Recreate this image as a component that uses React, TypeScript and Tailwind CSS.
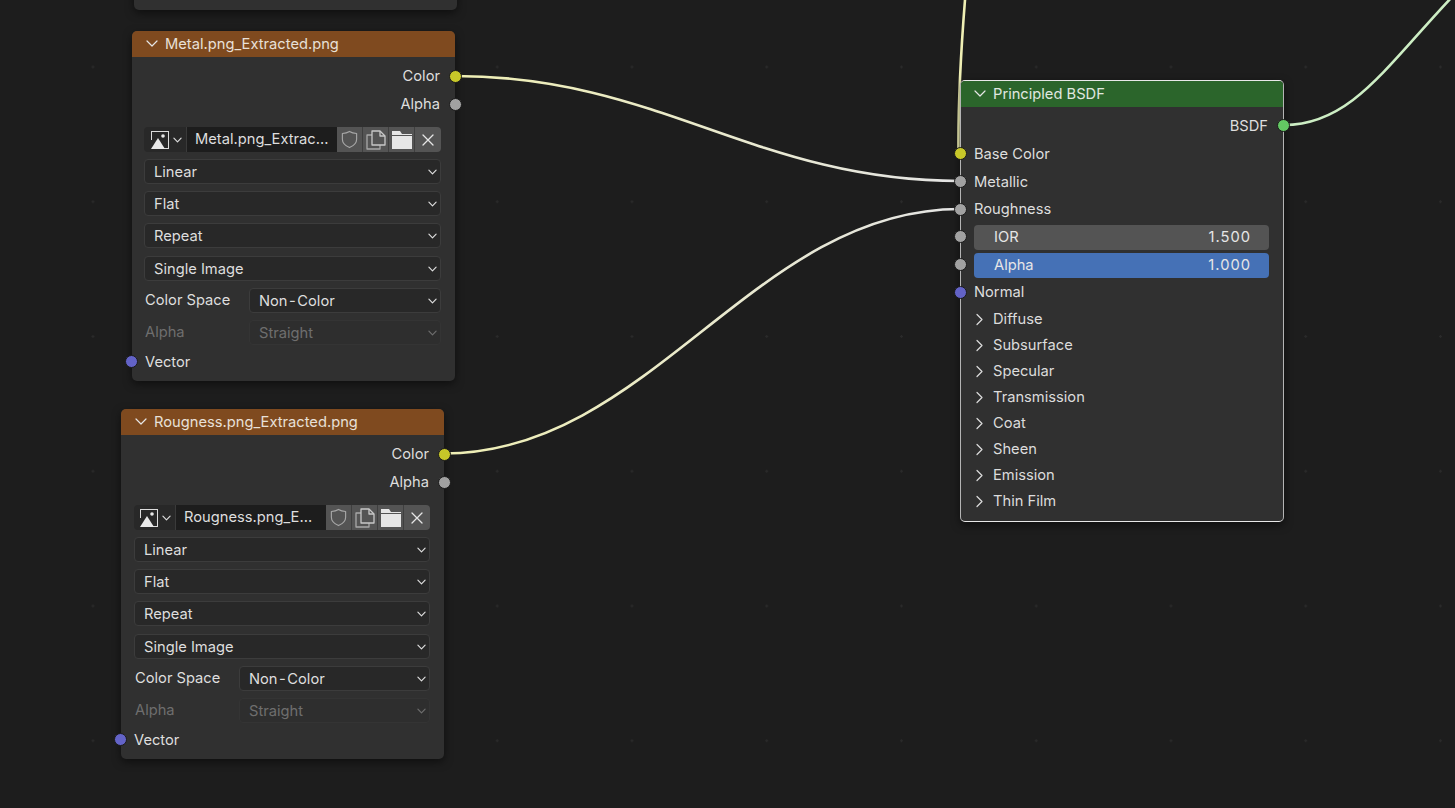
import React from 'react';

const font = { fontFamily: 'Inter, "Noto Sans", sans-serif' };

const ChevronDown = ({ className = 'w-[9px] h-[6px]' }: { className?: string }) => (
  <svg viewBox="0 0 10 6" className={className} fill="none" stroke="currentColor" strokeWidth="1.3" strokeLinecap="round" strokeLinejoin="round">
    <path d="M1 1l4 4 4-4" />
  </svg>
);

const ChevronHeader = () => (
  <svg viewBox="0 0 12 7" className="w-[12px] h-[7px] -mt-[2px] text-[#e6e6e6]" fill="none" stroke="currentColor" strokeWidth="1.2" strokeLinecap="round" strokeLinejoin="round">
    <path d="M1 1l5 5 5-5" />
  </svg>
);

const ChevronRight = () => (
  <svg viewBox="0 0 7 12" className="w-[7px] h-[13px] text-[#dcdcdc]" fill="none" stroke="currentColor" strokeWidth="1.2" strokeLinecap="round" strokeLinejoin="round">
    <path d="M1 1l5 5-5 5" />
  </svg>
);

const ImageIcon = () => (
  <svg viewBox="0 0 20 20" className="w-[20px] h-[20px] shrink-0">
    <path d="M1 1h18v18h-5v-1h4V2H2v8H1z" fill="#dcdcdc" />
    <path d="M1 19l7-11 7 11z" fill="#e8e8e8" />
    <circle cx="13" cy="6" r="1.8" fill="#e8e8e8" />
  </svg>
);

const ShieldIcon = () => (
  <svg viewBox="0 0 20 20" className="w-[19px] h-[19px] text-[#a8a8a8]" fill="none" stroke="currentColor" strokeWidth="1.2" strokeLinejoin="round">
    <path d="M10 1.5c2.400 1.500 5 2 7.500 2.200v6c0 4-3 6.800-7.500 8.800-4.500-2-7.500-4.800-7.500-8.800v-6C5 3.500 7.600 3 10 1.500z" />
  </svg>
);

const CopyIcon = () => (
  <svg viewBox="0 0 20 20" className="w-[20px] h-[20px] text-[#c8c8c8]" fill="none" stroke="currentColor" strokeWidth="1.3" strokeLinejoin="round">
    <path d="M6 5H1v14h13v-4" stroke="#a8a8a8" />
    <path d="M6 1h8l5 5v9H6z" />
    <path d="M14 1v5h5" />
  </svg>
);

const FolderIcon = () => (
  <svg viewBox="0 0 20 18" className="w-[20px] h-[18px]" fill="#e6e6e6">
    <path d="M0 0h8l2 3h10v1H0z" />
    <path d="M0 5h20v13H0z" />
  </svg>
);

const CloseIcon = () => (
  <svg viewBox="0 0 12 12" className="w-[12px] h-[12px] text-[#e6e6e6]" fill="none" stroke="currentColor" strokeWidth="1.3" strokeLinecap="round">
    <path d="M1 1l10 10M11 1L1 11" />
  </svg>
);

const Select = ({ children, disabled, className = '' }: { children: React.ReactNode; disabled?: boolean; className?: string }) => (
  <div
    className={`h-[25px] flex items-center justify-between pl-[9px] pr-[3px] pt-[1px] rounded-[4px] border ${
      disabled ? 'border-[#343434] bg-[#2e2e2e] text-[#6e6e6e]' : 'border-[#3c3c3c] bg-[#282828] text-[#dedede]'
    } ${className}`}
  >
    <span>{children}</span>
    <ChevronDown />
  </div>
);

const Socket = ({ color, className }: { color: string; className: string }) => (
  <span
    className={`absolute w-[13px] h-[13px] rounded-full border border-[#1a1a1a] ${className}`}
    style={{ backgroundColor: color }}
  />
);

const ImageNode = ({ title, file, className, inset, thumb }: { title: string; file: string; className: string; inset: string; thumb: string }) => (
  <div className={`absolute w-[323px] h-[350px] rounded-[5px] bg-[#303030] shadow-[0_3px_8px_rgba(0,0,0,0.5)] text-[14.7px] text-[#dedede] ${className}`}>
    <div className="h-[26px] rounded-t-[5px] bg-[#7f4a1f] flex items-center pl-[14px] gap-[7px] text-[#e8e0d8]">
      <ChevronHeader />
      <span>{title}</span>
    </div>
    <div className="h-[27px] mt-[6px] pr-[15px] flex items-center justify-end">Color</div>
    <div className="h-[28px] pr-[15px] flex items-center justify-end">Alpha</div>
    <div className={`mt-[9px] flex flex-col gap-[7px] ${inset}`}>
      <div className="h-[25px] flex">
        <div className={`flex items-center gap-[3px] rounded-l-[4px] bg-[#282828] ${thumb}`}>
          <ImageIcon />
          <ChevronDown className="w-[9px] h-[6px] text-[#dcdcdc]" />
        </div>
        <div className="w-[151px] flex items-center pl-[8px] pb-[1px] bg-[#1d1d1d] border-l border-[#3a3a3a]">{file}</div>
        <div className="w-[25px] flex items-center justify-center bg-[#545454]"><ShieldIcon /></div>
        <div className="w-[26px] flex items-center justify-center bg-[#545454] border-l border-[#3f3f3f]"><CopyIcon /></div>
        <div className="w-[26px] flex items-center justify-center bg-[#545454] border-l border-[#3f3f3f]"><FolderIcon /></div>
        <div className="w-[27px] flex items-center justify-center rounded-r-[4px] bg-[#545454] border-l border-[#3f3f3f]"><CloseIcon /></div>
      </div>
      <Select>Linear</Select>
      <Select>Flat</Select>
      <Select>Repeat</Select>
      <Select className="mt-[1px]">Single Image</Select>
      <div className="flex items-center">
        <span className="w-[105px] pl-[1px]">Color Space</span>
        <Select className="flex-1">Non<span className="mx-[1.5px]">-</span>Color</Select>
      </div>
      <div className="flex items-center">
        <span className="w-[105px] pl-[1px] text-[#6e6e6e]">Alpha</span>
        <Select disabled className="flex-1">Straight</Select>
      </div>
    </div>
    <div className="h-[20px] mt-[7px] pl-[13px] flex items-center">Vector</div>
    <Socket color="#c7c729" className="top-[39px] -right-[7px]" />
    <Socket color="#a1a1a1" className="top-[67px] -right-[7px]" />
    <Socket color="#6363c7" className="top-[324px] -left-[7px]" />
  </div>
);

const PANELS = ['Diffuse', 'Subsurface', 'Specular', 'Transmission', 'Coat', 'Sheen', 'Emission', 'Thin Film'];

const ValueField = ({ label, value, className }: { label: string; value: string; className: string }) => (
  <div className={`h-[25px] rounded-[4px] flex items-center justify-between pl-[20px] pr-[18px] text-[#e6e6e6] ${className}`}>
    <span>{label}</span>
    <span className="tracking-[1px]">{value}</span>
  </div>
);

const BsdfNode = () => (
  <div className="absolute left-[960px] top-[80px] w-[324px] h-[442px] rounded-[5px] bg-[#303030] border border-[#e8e8e8] border-x-[#b4b4b4] shadow-[0_3px_8px_rgba(0,0,0,0.5)] text-[14.7px] text-[#dedede]">
    <div className="h-[26px] rounded-t-[4px] bg-[#2b652b] flex items-center pl-[13px] gap-[7px] text-[#e0e8e0]">
      <ChevronHeader />
      <span>Principled BSDF</span>
    </div>
    <div className="h-[28px] mt-[5px] pr-[15px] flex items-center justify-end">BSDF</div>
    <div className="h-[28px] pl-[13px] flex items-center">Base Color</div>
    <div className="h-[28px] pl-[13px] flex items-center">Metallic</div>
    <div className="h-[26px] pl-[13px] flex items-center">Roughness</div>
    <div className="mt-[3px] pl-[13px] pr-[14px] flex flex-col gap-[3px]">
      <ValueField label="IOR" value="1.500" className="bg-[#545454]" />
      <ValueField label="Alpha" value="1.000" className="bg-[#4571b6]" />
    </div>
    <div className="h-[27px] mt-[1px] pl-[13px] flex items-center">Normal</div>
    <div className="flex flex-col">
      {PANELS.map((p) => (
        <div key={p} className="h-[26px] pl-[15px] flex items-center gap-[10px] text-[#dcdcdc]">
          <ChevronRight />
          <span>{p}</span>
        </div>
      ))}
    </div>
    <Socket color="#63c763" className="top-[38px] -right-[7px]" />
    <Socket color="#c7c729" className="top-[66px] -left-[7px]" />
    <Socket color="#a1a1a1" className="top-[94px] -left-[7px]" />
    <Socket color="#a1a1a1" className="top-[122px] -left-[7px]" />
    <Socket color="#a1a1a1" className="top-[149px] -left-[7px]" />
    <Socket color="#a1a1a1" className="top-[177px] -left-[7px]" />
    <Socket color="#6363c7" className="top-[205px] -left-[7px]" />
  </div>
);

const Wires = () => (
  <svg className="absolute inset-0" width="1455" height="808" fill="none" strokeWidth="2.6">
    <defs>
      <linearGradient id="metal" gradientUnits="userSpaceOnUse" x1="455" y1="0" x2="960" y2="0">
        <stop offset="0" stopColor="#efefb4" />
        <stop offset="1" stopColor="#e4e4e4" />
      </linearGradient>
      <linearGradient id="rough" gradientUnits="userSpaceOnUse" x1="444" y1="0" x2="960" y2="0">
        <stop offset="0" stopColor="#efefb4" />
        <stop offset="1" stopColor="#e4e4e4" />
      </linearGradient>
    </defs>
    <path d="M455 76C660 76 755 181 960 181" stroke="url(#metal)" />
    <path d="M444 453.500C650 453.500 754 209 960 209" stroke="url(#rough)" />
    <path d="M965 0C961 50 958 100 958.500 153" stroke="#efefb4" />
    <path d="M1284 125C1350 125 1385 68 1452 -3" stroke="#cdeec4" />
  </svg>
);

export default function App() {
  return (
    <div
      className="relative w-[1455px] h-[808px] overflow-hidden bg-[#1d1d1d] bg-[radial-gradient(circle,#2a2a2a_1px,transparent_1.5px)] bg-[size:134.75px_134.75px] bg-[position:25.6px_-0.4px]"
      style={font}
    >
      <Wires />
      <div className="absolute left-[134px] -top-[20px] w-[323px] h-[30px] rounded-[5px] bg-[#303030] shadow-[0_3px_8px_rgba(0,0,0,0.5)]" />
      <ImageNode title="Metal.png_Extracted.png" file="Metal.png_Extrac..." className="left-[132px] top-[31px]" inset="pl-[12px] pr-[14px]" thumb="w-[42px] pl-[6px]" />
      <ImageNode title="Rougness.png_Extracted.png" file="Rougness.png_E..." className="left-[121px] top-[409px]" inset="pl-[13px] pr-[14px]" thumb="w-[41px] pl-[5px]" />
      <BsdfNode />
    </div>
  );
}
